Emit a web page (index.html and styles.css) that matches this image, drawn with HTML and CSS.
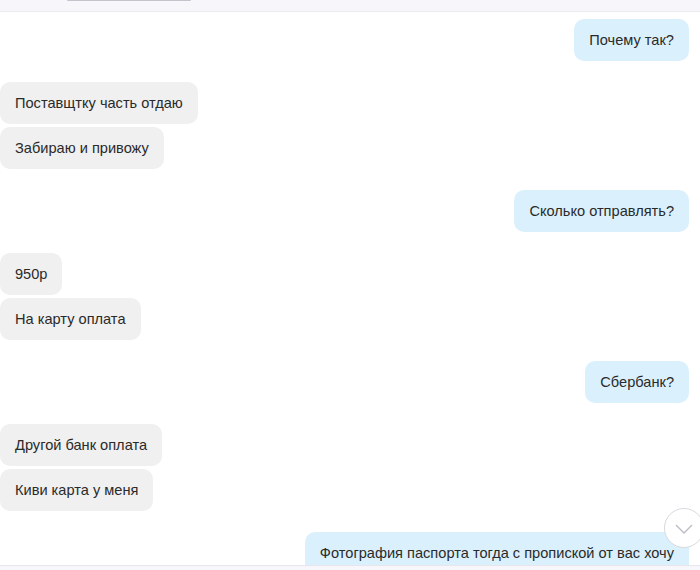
FILE: index.html
```html
<!DOCTYPE html>
<html lang="ru">
<head>
    <meta charset="UTF-8">
    <meta name="viewport" content="width=device-width, initial-scale=1.0">
    <title>Чат</title>
    <link rel="stylesheet" href="styles.css">
</head>
<body>
    <div class="chat">
        <div class="top-bar">
            <div class="top-field"></div>
        </div>
        <div class="messages">
            <div class="group out">
                <div class="bubble">Почему так?</div>
            </div>
            <div class="group in">
                <div class="bubble">Поставщтку часть отдаю</div>
                <div class="bubble">Забираю и привожу</div>
            </div>
            <div class="group out">
                <div class="bubble">Сколько отправлять?</div>
            </div>
            <div class="group in">
                <div class="bubble">950р</div>
                <div class="bubble">На карту оплата</div>
            </div>
            <div class="group out">
                <div class="bubble">Сбербанк?</div>
            </div>
            <div class="group in">
                <div class="bubble">Другой банк оплата</div>
                <div class="bubble">Киви карта у меня</div>
            </div>
            <div class="group out">
                <div class="bubble">Фотография паспорта тогда с пропиской от вас хочу</div>
            </div>
        </div>
        <div class="bottom-bar"></div>
        <button class="scroll-down" aria-label="Вниз">
            <svg width="20" height="12" viewBox="0 0 20 12">
                <path d="M2 2 L10 10 L18 2" fill="none" stroke="#b9bcc4" stroke-width="1.3"/>
            </svg>
        </button>
    </div>
</body>
</html>
```

FILE: styles.css
```css
* {
    margin: 0;
    padding: 0;
    box-sizing: border-box;
}

body {
    font-family: "Liberation Sans", Arial, sans-serif;
    background: #ffffff;
    color: #2a2a2a;
    overflow: hidden;
}

.chat {
    position: relative;
    width: 700px;
    height: 570px;
    display: flex;
    flex-direction: column;
    overflow: hidden;
}

.top-bar {
    height: 12px;
    flex-shrink: 0;
    background: #f7f7fb;
    border-bottom: 1px solid #ebebf0;
    padding-left: 67px;
}

.top-field {
    width: 124px;
    height: 1px;
    background: #c4c4cc;
    border-radius: 0 0 2px 2px;
}

.messages {
    flex: 1;
    overflow: hidden;
    padding: 7px 11px 0 0;
    display: flex;
    flex-direction: column;
    gap: 21px;
}

.group {
    display: flex;
    flex-direction: column;
    gap: 3px;
}

.group.out {
    align-items: flex-end;
}

.group.in {
    align-items: flex-start;
}

.bubble {
    font-size: 14.6px;
    line-height: 18px;
    padding: 12px 15px;
    border-radius: 10px;
    white-space: nowrap;
}

.in .bubble {
    background: #f0f0f0;
}

.out .bubble {
    background: #daf1fd;
}

.bottom-bar {
    height: 5px;
    flex-shrink: 0;
    background: #f7f7fb;
    border-top: 1px solid #e6e6ec;
}

.scroll-down {
    position: absolute;
    left: 664px;
    top: 508px;
    width: 40px;
    height: 40px;
    border-radius: 50%;
    background: #ffffff;
    border: 1px solid #d8d9de;
    display: flex;
    align-items: center;
    justify-content: center;
    padding-top: 2px;
    cursor: pointer;
}
```
